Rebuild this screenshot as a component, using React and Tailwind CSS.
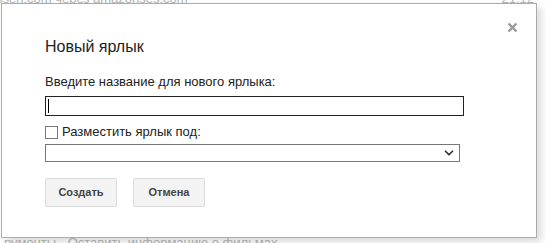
import { ChevronDown } from "lucide-react";

export default function App() {
  return (
    <div
      className="relative w-[546px] h-[243px] overflow-hidden bg-white"
      style={{ fontFamily: "Arial, 'Liberation Sans', sans-serif" }}
    >
      {/* page behind the modal, faded */}
      <div className="absolute inset-0 text-[13px] text-[#b5b5b5]">
        <div className="absolute left-[-4px] top-[-11px] whitespace-nowrap">
          ssen.com <span className="underline">через</span> amazonses.com
        </div>
        <div className="absolute right-[12px] top-[-11px]">21:12</div>
        <div className="absolute left-[4px] top-[233px] whitespace-nowrap">
          рументы · Оставить информацию о фильмах
        </div>
      </div>

      {/* modal */}
      <div className="relative pl-[1px] pt-[3px]">
        <div className="relative w-[536px] h-[235px] bg-white border border-[#acacac] shadow-[4px_4px_8px_rgba(0,0,0,0.15)] pl-[43px] pt-[33px]">
          <button className="absolute right-[18px] top-[18px]">
            <svg width="11" height="11" viewBox="0 0 11 11">
              <path d="M1.5 1.5 L9.5 9.5 M9.5 1.5 L1.5 9.5" stroke="#9a9a9a" strokeWidth="2.4" />
            </svg>
          </button>

          <h2 className="text-[16px] leading-[20px] text-[#222]">Новый ярлык</h2>

          <div className="mt-[17px] text-[13px] leading-[16px] text-[#222]">
            Введите название для нового ярлыка:
          </div>
          <div className="mt-[6px] w-[419px] h-[20px] border border-[#222] flex items-center pl-[2px]">
            <div className="w-px h-[14px] bg-black" />
          </div>

          <label className="mt-[8px] flex items-center gap-[4px] text-[13px] leading-[16px] text-[#222]">
            <span className="w-[13px] h-[13px] border border-[#777] bg-white" />
            Разместить ярлык под:
          </label>
          <div className="mt-[4px] w-[415px] h-[18px] border border-[#767676] flex items-center justify-end pr-[3px]">
            <ChevronDown size={14} strokeWidth={3} className="text-[#333]" />
          </div>

          <div className="mt-[16px] flex gap-[16px]">
            <button className="w-[72px] h-[29px] rounded-[2px] border border-[#dcdcdc] bg-[#f3f3f3] text-[11px] font-bold text-[#444]">
              Создать
            </button>
            <button className="w-[72px] h-[29px] rounded-[2px] border border-[#dcdcdc] bg-[#f3f3f3] text-[11px] font-bold text-[#444]">
              Отмена
            </button>
          </div>
        </div>
      </div>
    </div>
  );
}
